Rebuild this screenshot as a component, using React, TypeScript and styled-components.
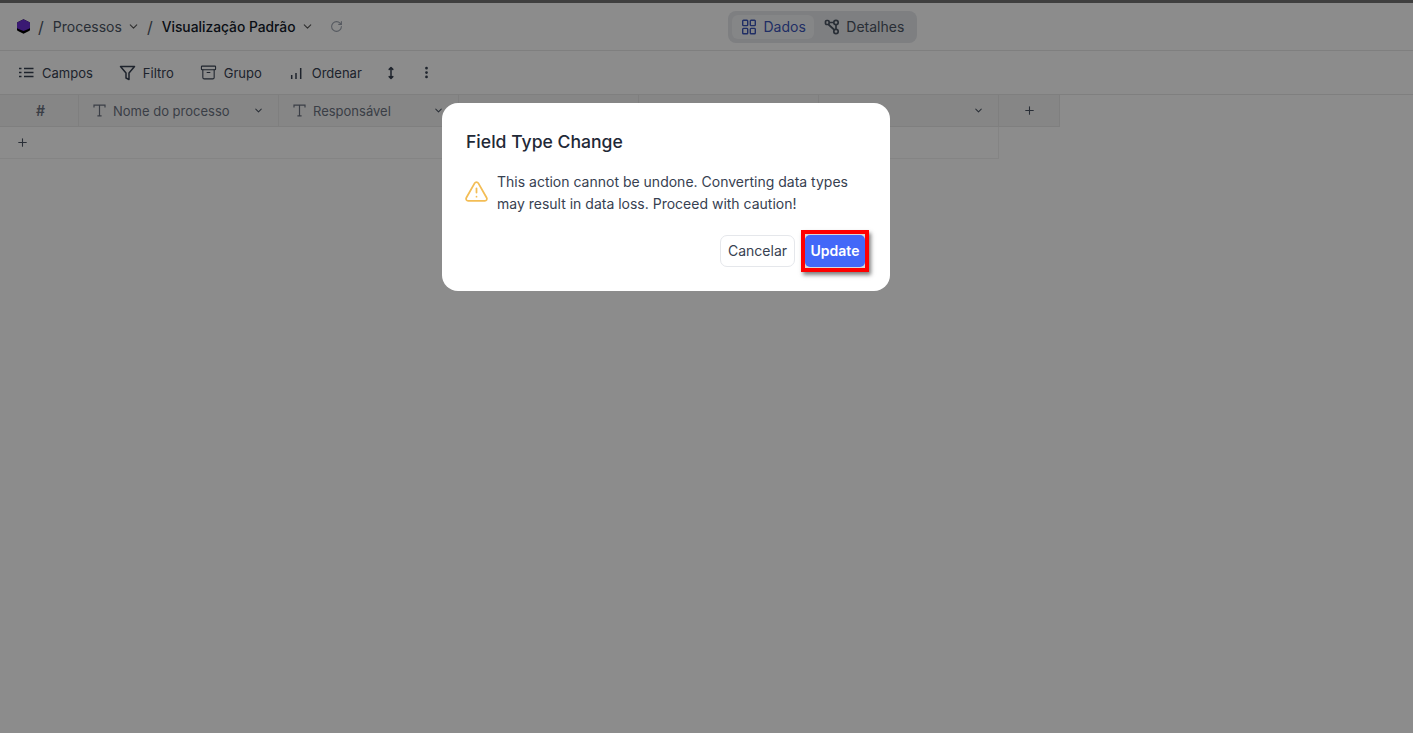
import * as React from 'react';
import styled, {createGlobalStyle} from 'styled-components';
import {ChevronDown, Archive, EllipsisVertical, Plus, RotateCw, TriangleAlert} from 'lucide-react';

const GlobalStyle = createGlobalStyle`
  html, body {
    margin: 0;
    padding: 0;
    height: 100%;
    background: #fff;
    font-family: Inter, "Noto Sans", "Liberation Sans", sans-serif;
  }
  #root { height: 100%; }
`;

const LogoIcon = () => (
  <svg width="15" height="15" viewBox="0 0 15 15">
    <path d="M7.5 .3 13 3c.6.3 1 .8 1 1.5v6c0 .7-.4 1.2-1 1.5l-5.500 2.700L2 12c-.6-.3-1-.8-1-1.500v-6C1 3.800 1.400 3.300 2 3z" fill="#000" />
    <path d="M7.500.3 13 3c.6.3 1 .8 1 1.500v3.700c0 .7-.4 1.200-1 1.500l-5.500 2.300L2 9.700c-.6-.3-1-.8-1-1.500V4.500C1 3.800 1.400 3.300 2 3z" fill="#6a2ed1" />
  </svg>
);

const GridIcon = () => (
  <svg width="16" height="16" viewBox="0 0 16 16" fill="none" stroke="currentColor" strokeWidth="1.4">
    <rect x="1.700" y="1.200" width="5" height="5.400" rx=".8" />
    <rect x="9.300" y="1.200" width="5" height="5.400" rx=".8" />
    <rect x="1.700" y="9.400" width="5" height="5.400" rx=".8" />
    <rect x="9.300" y="9.400" width="5" height="5.400" rx=".8" />
  </svg>
);

const NodesIcon = () => (
  <svg width="16" height="16" viewBox="0 0 16 16" fill="none" stroke="currentColor" strokeWidth="1.7">
    <rect x="1.500" y="1.500" width="3.600" height="4" rx="1.200" />
    <circle cx="12" cy="3.500" r="2.200" />
    <circle cx="12" cy="12.500" r="2.200" />
    <path d="M5 3.500h4.800M4.500 5.500l6 5.500M12 5.700v4.600" />
  </svg>
);

const ListLinesIcon = () => (
  <svg width="17" height="17" viewBox="0 0 17 17" fill="none" stroke="currentColor" strokeWidth="1.4">
    <path d="M1 4.500h2.500M1 8.500h2.500M1 12.500h2.500M6 4.500h9.500M6 8.500h9.500M6 12.500h9.500" />
  </svg>
);

const FunnelIcon = () => (
  <svg width="17" height="17" viewBox="0 0 17 17" fill="none" stroke="currentColor" strokeWidth="1.5" strokeLinejoin="round">
    <path d="M1.500 2.500h14L10 9v6.500L7 14V9z" />
  </svg>
);

const BarsIcon = () => (
  <svg width="17" height="16" viewBox="0 0 17 16" fill="none" stroke="currentColor" strokeWidth="1.500">
    <path d="M3.700 14v-4M8 14V8M12.700 14V3" />
  </svg>
);

const RowHeightIcon = () => (
  <svg width="12" height="14" viewBox="0 0 12 14" fill="none" stroke="currentColor" strokeWidth="1.500" strokeLinecap="round" strokeLinejoin="round">
    <path d="M6 2v10M4.200 3.400 6 1.600l1.800 1.800M4.200 10.600 6 12.400l1.800-1.800" />
  </svg>
);

const SerifT = () => (
  <svg width="13" height="13" viewBox="0 0 13 13" fill="none" stroke="currentColor" strokeWidth="1.200">
    <path d="M1 3.500V1.200h11v2.300M6.500 1.200v10.600M4.400 11.800h4.200" />
  </svg>
);

const columns = [
  {label: 'Nome do processo', width: 200},
  {label: 'Responsável', width: 180},
  {label: '', width: 180},
  {label: '', width: 180},
  {label: '', width: 180},
];

const App = () => {
  return (
    <Page>
      <GlobalStyle />
      <TopStrip />
      <Header>
        <Breadcrumb>
          <LogoIcon />
          <Slash>/</Slash>
          <Crumb>Processos</Crumb>
          <ChevronDown size={13} color="#555" />
          <Slash>/</Slash>
          <Crumb $current>Visualização Padrão</Crumb>
          <ChevronDown size={13} color="#555" />
          <Refresh>
            <RotateCw size={13} />
          </Refresh>
        </Breadcrumb>
        <Tabs>
          <Tab $active>
            <GridIcon />
            <TabLabel>Dados</TabLabel>
          </Tab>
          <Tab>
            <NodesIcon />
            <TabLabel>Detalhes</TabLabel>
          </Tab>
        </Tabs>
      </Header>
      <Toolbar>
        <ToolButton>
          <ListLinesIcon />
          Campos
        </ToolButton>
        <ToolButton>
          <FunnelIcon />
          Filtro
        </ToolButton>
        <ToolButton>
          <Archive size={17} strokeWidth={1.5} />
          Grupo
        </ToolButton>
        <ToolButton $tight>
          <BarsIcon />
          Ordenar
        </ToolButton>
        <IconButton>
          <RowHeightIcon />
        </IconButton>
        <IconButton>
          <EllipsisVertical size={15} strokeWidth={2.4} />
        </IconButton>
      </Toolbar>
      <HeadRow>
        <HashCell>#</HashCell>
        {columns.map((col, i) => (
          <HeadCell key={i} $width={col.width}>
            {col.label && <SerifT />}
            <HeadLabel>{col.label}</HeadLabel>
            <CellChevron size={11} strokeWidth={2.2} />
          </HeadCell>
        ))}
        <AddColumn>
          <Plus size={13} strokeWidth={2} />
        </AddColumn>
      </HeadRow>
      <AddRow>
        <Plus size={13} strokeWidth={2} />
      </AddRow>
      <Overlay>
        <Dialog>
          <DialogTitle>Field Type Change</DialogTitle>
          <DialogBody>
            <WarningIcon size={25} strokeWidth={1.7} />
            <DialogText>
              This action cannot be undone. Converting data types may result in data loss. Proceed with caution!
            </DialogText>
          </DialogBody>
          <DialogFooter>
            <CancelButton>Cancelar</CancelButton>
            <UpdateFrame>
              <UpdateButton>Update</UpdateButton>
            </UpdateFrame>
          </DialogFooter>
        </Dialog>
      </Overlay>
    </Page>
  );
};

export default App;

const Page = styled.div`
  position: relative;
  height: 733px;
  overflow: hidden;
  background: #fff;
  color: #1f2937;
  font-size: 13px;
`;

const TopStrip = styled.div`
  height: 3px;
  background: #747474;
`;

const Header = styled.header`
  position: relative;
  height: 47px;
  display: flex;
  align-items: center;
  padding-left: 16px;
  border-bottom: 1px solid #e8e8e8;
`;

const Breadcrumb = styled.div`
  display: flex;
  align-items: center;
  gap: 5px;
`;

const Slash = styled.span`
  margin: 0 4px 0 2px;
  font-size: 16px;
  color: #4b5563;
`;

const Crumb = styled.span<{$current?: boolean}>`
  font-size: ${(p) => (p.$current ? '13.8px' : '14px')};
  color: ${(p) => (p.$current ? '#111827' : '#4b5563')};
  font-weight: ${(p) => (p.$current ? 500 : 400)};
`;

const Refresh = styled.span`
  display: flex;
  margin-left: 11px;
  color: #9ca3af;
`;

const Tabs = styled.div`
  position: absolute;
  left: 728px;
  top: 8px;
  width: 189px;
  height: 32px;
  box-sizing: border-box;
  display: flex;
  align-items: center;
  gap: 2px;
  padding: 4px;
  border-radius: 8px;
  background: #e5e7eb;
`;

const Tab = styled.div<{$active?: boolean}>`
  height: 24px;
  display: flex;
  align-items: center;
  gap: 6.5px;
  padding: 0 8px 0 ${(p) => (p.$active ? 9 : 8)}px;
  box-sizing: border-box;
  border-radius: 6px;
  font-size: 14px;
  background: ${(p) => (p.$active ? '#f3f4f6' : 'transparent')};
  color: ${(p) => (p.$active ? '#3b54b8' : '#4b5563')};
`;

const TabLabel = styled.span`
  padding-bottom: 1px;
`;

const Toolbar = styled.div`
  height: 43px;
  display: flex;
  align-items: center;
  padding-left: 18px;
  border-bottom: 1px solid #e8e8e8;
`;

const ToolButton = styled.div<{$tight?: boolean}>`
  display: flex;
  align-items: center;
  gap: 7px;
  margin-right: ${(p) => (p.$tight ? 23 : 26)}px;
  font-size: 13px;
  color: #374151;
`;

const IconButton = styled.div`
  display: flex;
  margin-right: 22px;
  color: #374151;
`;

const HeadRow = styled.div`
  height: 31px;
  display: flex;
  border-bottom: 1px solid #e8e8e8;
  width: 1060px;
  background: #f5f5f5;
`;

const HashCell = styled.div`
  width: 79px;
  box-sizing: border-box;
  display: flex;
  align-items: center;
  justify-content: center;
  padding-left: 3px;
  border-right: 1px solid #e8e8e8;
  font-size: 14px;
  font-weight: 600;
  color: #6b7280;
`;

const HeadCell = styled.div<{$width: number}>`
  width: ${(p) => p.$width}px;
  box-sizing: border-box;
  display: flex;
  align-items: center;
  gap: 7px;
  padding: 0 14px;
  border-right: 1px solid #e8e8e8;
  color: #6b7280;
`;

const HeadLabel = styled.span`
  flex: 1;
  font-size: 13px;
  white-space: nowrap;
`;

const CellChevron = styled(ChevronDown)`
  color: #4b5563;
`;

const AddColumn = styled.div`
  flex: 1;
  display: flex;
  align-items: center;
  justify-content: center;
  border-right: 1px solid #e8e8e8;
  color: #4b5563;
`;

const AddRow = styled.div`
  width: 999px;
  height: 32px;
  box-sizing: border-box;
  display: flex;
  align-items: center;
  padding-left: 16px;
  border-bottom: 1px solid #f0f0f0;
  border-right: 1px solid #f0f0f0;
  color: #4b5563;
`;

const Overlay = styled.div`
  position: absolute;
  inset: 0;
  background: rgba(0, 0, 0, 0.45);
`;

const Dialog = styled.div`
  position: absolute;
  left: 442px;
  top: 103px;
  width: 448px;
  height: 188px;
  box-sizing: border-box;
  padding: 26px 24px 0;
  border-radius: 16px;
  background: #fff;
`;

const DialogTitle = styled.h2`
  margin: 0;
  font-size: 17.6px;
  line-height: 26px;
  font-weight: 500;
  color: #1f2937;
`;

const DialogBody = styled.div`
  margin-top: 16px;
  display: flex;
  align-items: center;
  gap: 8px;
`;

const WarningIcon = styled(TriangleAlert)`
  flex: none;
  margin: 0 0 4px -2px;
  color: #f3bd55;
`;

const DialogText = styled.p`
  margin: 0;
  width: 362px;
  font-size: 14px;
  line-height: 22px;
  color: #374151;
`;

const DialogFooter = styled.div`
  margin: 15px -3px 0 0;
  display: flex;
  justify-content: flex-end;
  align-items: center;
  gap: 6px;
`;

const CancelButton = styled.div`
  width: 75px;
  height: 32px;
  box-sizing: border-box;
  display: flex;
  align-items: center;
  justify-content: center;
  padding-bottom: 1px;
  border: 1px solid #e5e7eb;
  border-radius: 7px;
  font-size: 14px;
  color: #374151;
`;

const UpdateFrame = styled.div`
  width: 68px;
  height: 42px;
  box-sizing: border-box;
  display: flex;
  border: 4px solid #f00;
  background: #d8d8d8;
  box-shadow: 2px 3px 4px rgba(0, 0, 0, 0.5);
`;

const UpdateButton = styled.div`
  flex: 1;
  margin: 1px 0;
  padding-bottom: 1px;
  display: flex;
  align-items: center;
  justify-content: center;
  border-radius: 5px;
  background: #4368f8;
  color: #fff;
  font-size: 14px;
  font-weight: 600;
`;
